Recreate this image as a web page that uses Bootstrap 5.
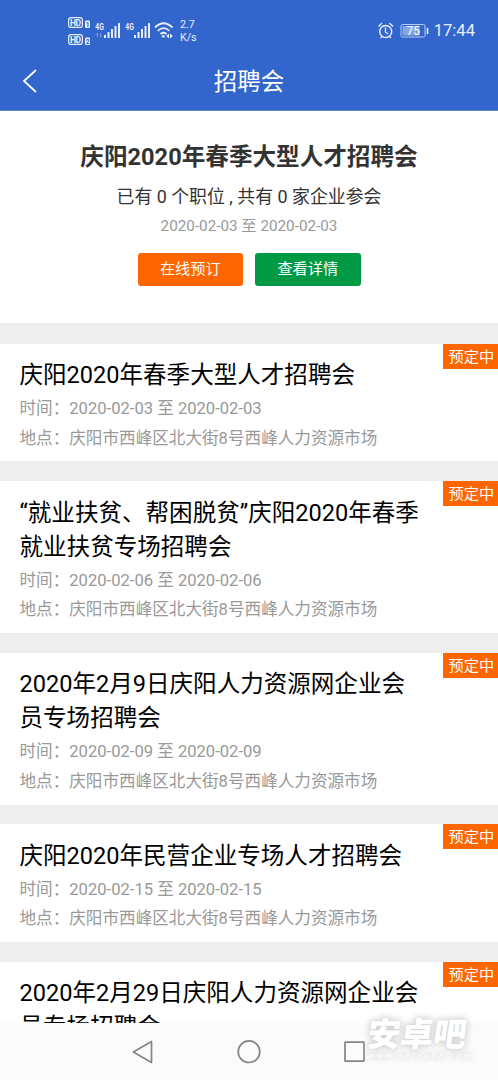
<!DOCTYPE html>
<html lang="zh-CN">
<head>
<meta charset="utf-8">
<meta name="viewport" content="width=device-width, initial-scale=1">
<title>招聘会</title>
<link href="https://cdn.jsdelivr.net/npm/bootstrap@5.3.0/dist/css/bootstrap.min.css" rel="stylesheet">
<style>
body{font-family:Roboto,"Noto Sans CJK SC",sans-serif;background:#eee;color:#000;height:1080px}
.blue-top{background:#3366cc;color:#fff;height:111px;border-bottom:1px solid #5f86bd}
.status-bar{height:55px;padding:7px 23px 0 67px;color:#e6eefb}
.speed{font-size:10.7px;line-height:13px;margin:11px 0 0 5px}
.clock{font-size:16.6px;line-height:20px;margin:14px 0 0 5px}
.alarm-battery{margin-top:14px}
.title-bar{height:55px}
.title-bar h1{font-size:23.5px;line-height:54px;font-weight:400}
.back{left:21px;top:12px}
.hero{height:212px;padding-top:28px;color:#333}
.hero h2{font-size:23.6px;line-height:36px;font-weight:700}
.count{font-size:17.9px;line-height:30px;margin-top:7px}
.hero-date{font-size:15.25px;line-height:29px;color:#999}
.hero-actions{gap:12px;margin-top:12px}
.btn-fair{width:105.5px;height:33px;padding:0;border:0;border-radius:3px;font-size:15.2px;line-height:32px;color:#fff}
.orange{background:#ff6600}.green{background:#009944}
.fair-list{gap:19.7px;padding-top:20.8px;min-height:0}
.fair{background:#fff;padding:14.4px 76px 8px 19.5px}
.fair h3{font-size:23.55px;line-height:34.2px;font-weight:400;margin-bottom:1.9px}
.meta{font-size:16.6px;line-height:29.6px;color:#999;white-space:nowrap}
.state{font-size:15.2px;line-height:27px;width:55.5px;height:25px;padding-left:6px;color:#fff;white-space:nowrap}
.sysnav{background:#fbfbfb;height:57px}
.watermark{left:368px;top:1012px;width:112px;color:#fff;text-shadow:0 0 2px #ddd,0 0 6px #ccc,0 0 10px #ddd}
.watermark b{font:900 33px/40px "Noto Sans CJK SC",sans-serif;transform:skewX(-8deg);white-space:nowrap}
.watermark span{font:italic 700 8px/8px "Liberation Sans",sans-serif;letter-spacing:2.2px;white-space:nowrap}
</style>
</head>
<body class="overflow-hidden position-relative">
<div class="d-flex flex-column h-100">
<header class="blue-top flex-shrink-0">
  <div class="status-bar d-flex align-items-start">
    <svg width="108" height="44" viewBox="67 7 108 44" fill="#e6eefb" font-family="Roboto,sans-serif" font-weight="700">
      <g fill="none" stroke="#e6eefb" stroke-width="1.200"><rect x="68.600" y="17.600" width="13.800" height="9.800" rx="2.500"/><rect x="68.600" y="34.600" width="13.800" height="9.800" rx="2.500"/></g>
      <g font-size="8.500"><text x="70" y="25.600" textLength="11">HD</text><text x="70" y="42.600" textLength="11">HD</text></g>
      <rect x="85" y="20.500" width="5" height="7.500" rx="1"/><rect x="85" y="37.500" width="5" height="7.500" rx="1"/>
      <g fill="#3366cc" font-size="6.500"><text x="85.700" y="26.700">1</text><text x="85.700" y="43.700">2</text></g>
      <g font-size="9"><text x="95.300" y="29.500" textLength="8.500" lengthAdjust="spacingAndGlyphs">4G</text><text x="125.300" y="29.500" textLength="8.500" lengthAdjust="spacingAndGlyphs">4G</text></g>
      <path d="M104 35h2v3h-2zM107.500 32h2v6h-2zM111 29h2v9h-2zM114.500 26h2v12h-2zM118 23h2v15h-2z"/>
      <path d="M134 35h2v3h-2zM137.500 32h2v6h-2zM141 29h2v9h-2zM144.500 26h2v12h-2zM148 23h2v15h-2z"/>
      <path d="M97.500 37v-4m-1.500 1.500 1.500-1.500M100.500 33v4m1.500-1.500-1.500 1.500" fill="none" stroke="#7d9fe0"/>
      <g fill="none" stroke="#e6eefb" stroke-width="1.800"><path d="M155 27.500Q163.500 19 172.500 27.500"/><path d="M157.800 30.800Q163.500 25.500 169.500 30.800"/><path d="M160.500 34Q163.500 31.500 166.500 34"/></g>
      <circle cx="163.300" cy="36.300" r="1.400"/><path d="M169 33.500v5l-2.800-2.500zM170 33.500l2.800 2.500-2.800 2.500z"/>
    </svg>
    <div class="speed">2.7<br>K/s</div>
    <svg class="alarm-battery ms-auto flex-shrink-0" width="52" height="20" viewBox="377 21 52 20" fill="none" stroke="#e6eefb">
      <circle cx="385.700" cy="31.500" r="6" stroke-width="1.500"/><path d="M378.500 26.500l3.500-3.500M393 26.500l-3.500-3.500M385.500 27.500v4.500l2.500 2M382 36.500l-1.500 1.500M389.500 36.500l1.500 1.500" stroke-width="1.400"/>
      <rect x="401" y="24.500" width="24" height="12.500" rx="1.500" stroke="#b9cced"/><path d="M402.500 26h17v9.500h-17z" fill="#86a6e3" stroke="none"/><path d="M427.500 28v6" stroke-width="1.700"/>
      <text x="406.500" y="35" font-family="Roboto,sans-serif" font-size="12" fill="#fff" stroke="none">75</text>
    </svg>
    <div class="clock">17:44</div>
  </div>
  <div class="title-bar position-relative text-center">
    <svg class="back position-absolute" width="18" height="28" viewBox="0 0 18 28" fill="none" stroke="#fff" stroke-width="1.800"><path d="M15 3 3 14l12 11"/></svg>
    <h1 class="m-0">招聘会</h1>
  </div>
</header>
<section class="hero bg-white text-center flex-shrink-0">
  <h2 class="mb-0">庆阳2020年春季大型人才招聘会</h2>
  <div class="count">已有 0 个职位 , 共有 0 家企业参会</div>
  <div class="hero-date">2020-02-03 至 2020-02-03</div>
  <div class="hero-actions d-flex justify-content-center"><a class="btn btn-fair orange">在线预订</a><a class="btn btn-fair green">查看详情</a></div>
</section>
<main class="fair-list d-flex flex-column flex-grow-1 overflow-hidden">
  <article class="fair position-relative flex-shrink-0"><span class="state orange position-absolute top-0 end-0">预定中</span><h3>庆阳2020年春季大型人才招聘会</h3><div class="meta">时间：2020-02-03 至 2020-02-03</div><div class="meta">地点：庆阳市西峰区北大街8号西峰人力资源市场</div></article>
  <article class="fair position-relative flex-shrink-0"><span class="state orange position-absolute top-0 end-0">预定中</span><h3>“就业扶贫、帮困脱贫”庆阳2020年春季<br>就业扶贫专场招聘会</h3><div class="meta">时间：2020-02-06 至 2020-02-06</div><div class="meta">地点：庆阳市西峰区北大街8号西峰人力资源市场</div></article>
  <article class="fair position-relative flex-shrink-0"><span class="state orange position-absolute top-0 end-0">预定中</span><h3>2020年2月9日庆阳人力资源网企业会<br>员专场招聘会</h3><div class="meta">时间：2020-02-09 至 2020-02-09</div><div class="meta">地点：庆阳市西峰区北大街8号西峰人力资源市场</div></article>
  <article class="fair position-relative flex-shrink-0"><span class="state orange position-absolute top-0 end-0">预定中</span><h3>庆阳2020年民营企业专场人才招聘会</h3><div class="meta">时间：2020-02-15 至 2020-02-15</div><div class="meta">地点：庆阳市西峰区北大街8号西峰人力资源市场</div></article>
  <article class="fair position-relative flex-shrink-0"><span class="state orange position-absolute top-0 end-0">预定中</span><h3>2020年2月29日庆阳人力资源网企业会<br>员专场招聘会</h3></article>
</main>
<nav class="sysnav flex-shrink-0">
  <svg class="d-block" width="498" height="57" viewBox="0 1023 498 57" fill="none" stroke="#858585" stroke-width="1.700" stroke-linejoin="round"><path d="M151.500 1041.500v21L133.300 1052z"/><circle cx="249" cy="1051.700" r="10.800"/><rect x="345" y="1042.200" width="19" height="19" rx=".5"/></svg>
</nav>
</div>
<div class="watermark position-absolute"><b class="d-block">安卓吧</b><span class="d-block">www.anzhuo8.com</span></div>
<script src="https://cdn.jsdelivr.net/npm/bootstrap@5.3.0/dist/js/bootstrap.bundle.min.js"></script>
</body>
</html>
